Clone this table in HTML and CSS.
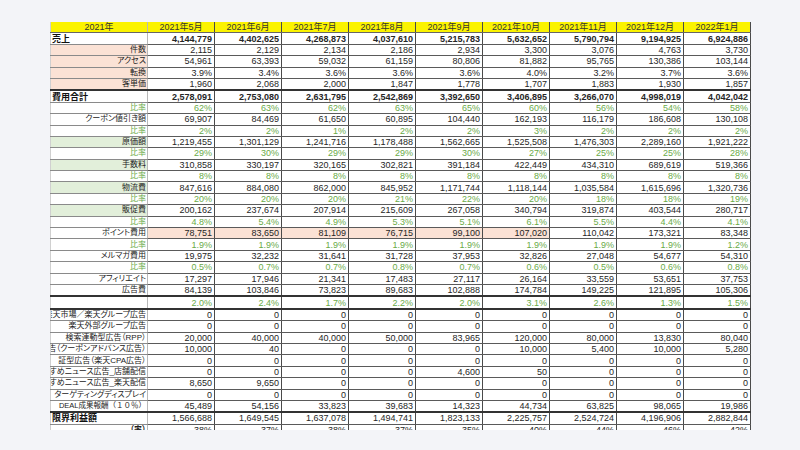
FILE: index.html
```html
<!DOCTYPE html>
<html lang="ja">
<head>
<meta charset="utf-8">
<title>2021年 月次損益</title>
<link rel="stylesheet" href="styles.css">
</head>
<body>
<div class="sheet">
<table class="grid">
<colgroup><col class="c-lab"><col class="c-m"><col class="c-m"><col class="c-m"><col class="c-m"><col class="c-m"><col class="c-m"><col class="c-m"><col class="c-m"><col class="c-m"></colgroup>
<tr class="head"><td class="lab"><div class="lt">2021年</div></td><td>2021年5月</td><td>2021年6月</td><td>2021年7月</td><td>2021年8月</td><td>2021年9月</td><td>2021年10月</td><td>2021年11月</td><td>2021年12月</td><td>2022年1月</td></tr>
<tr class="total"><td class="lab left"><div class="lt">売上</div></td><td>4,144,779</td><td>4,402,625</td><td>4,268,873</td><td>4,037,610</td><td>5,215,783</td><td>5,632,652</td><td>5,790,794</td><td>9,194,925</td><td>6,924,886</td></tr>
<tr><td class="lab pk"><div class="lt">件数</div></td><td>2,115</td><td>2,129</td><td>2,134</td><td>2,186</td><td>2,934</td><td>3,300</td><td>3,076</td><td>4,763</td><td>3,730</td></tr>
<tr><td class="lab pk"><div class="lt">アクセス</div></td><td>54,961</td><td>63,393</td><td>59,032</td><td>61,159</td><td>80,806</td><td>81,882</td><td>95,765</td><td>130,386</td><td>103,144</td></tr>
<tr><td class="lab pk"><div class="lt">転換</div></td><td>3.9%</td><td>3.4%</td><td>3.6%</td><td>3.6%</td><td>3.6%</td><td>4.0%</td><td>3.2%</td><td>3.7%</td><td>3.6%</td></tr>
<tr><td class="lab pk"><div class="lt">客単価</div></td><td>1,960</td><td>2,068</td><td>2,000</td><td>1,847</td><td>1,778</td><td>1,707</td><td>1,883</td><td>1,930</td><td>1,857</td></tr>
<tr class="total thick"><td class="lab left"><div class="lt">費用合計</div></td><td>2,578,091</td><td>2,753,080</td><td>2,631,795</td><td>2,542,869</td><td>3,392,650</td><td>3,406,895</td><td>3,266,070</td><td>4,998,019</td><td>4,042,042</td></tr>
<tr class="ratio"><td class="lab"><div class="lt">比率</div></td><td>62%</td><td>63%</td><td>62%</td><td>63%</td><td>65%</td><td>60%</td><td>56%</td><td>54%</td><td>58%</td></tr>
<tr><td class="lab"><div class="lt">クーポン値引き額</div></td><td>69,907</td><td>84,469</td><td>61,650</td><td>60,895</td><td>104,440</td><td>162,193</td><td>116,179</td><td>186,608</td><td>130,108</td></tr>
<tr class="ratio"><td class="lab"><div class="lt">比率</div></td><td>2%</td><td>2%</td><td>1%</td><td>2%</td><td>2%</td><td>3%</td><td>2%</td><td>2%</td><td>2%</td></tr>
<tr><td class="lab gn"><div class="lt">原価額</div></td><td>1,219,455</td><td>1,301,129</td><td>1,241,716</td><td>1,178,488</td><td>1,562,665</td><td>1,525,508</td><td>1,476,303</td><td>2,289,160</td><td>1,921,222</td></tr>
<tr class="ratio"><td class="lab"><div class="lt">比率</div></td><td>29%</td><td>30%</td><td>29%</td><td>29%</td><td>30%</td><td>27%</td><td>25%</td><td>25%</td><td>28%</td></tr>
<tr><td class="lab gn"><div class="lt">手数料</div></td><td>310,858</td><td>330,197</td><td>320,165</td><td>302,821</td><td>391,184</td><td>422,449</td><td>434,310</td><td>689,619</td><td>519,366</td></tr>
<tr class="ratio"><td class="lab"><div class="lt">比率</div></td><td>8%</td><td>8%</td><td>8%</td><td>8%</td><td>8%</td><td>8%</td><td>8%</td><td>8%</td><td>8%</td></tr>
<tr><td class="lab gn"><div class="lt">物流費</div></td><td>847,616</td><td>884,080</td><td>862,000</td><td>845,952</td><td>1,171,744</td><td>1,118,144</td><td>1,035,584</td><td>1,615,696</td><td>1,320,736</td></tr>
<tr class="ratio"><td class="lab"><div class="lt">比率</div></td><td>20%</td><td>20%</td><td>20%</td><td>21%</td><td>22%</td><td>20%</td><td>18%</td><td>18%</td><td>19%</td></tr>
<tr><td class="lab gn"><div class="lt">販促費</div></td><td>200,162</td><td>237,674</td><td>207,914</td><td>215,609</td><td>267,058</td><td>340,794</td><td>319,874</td><td>403,544</td><td>280,717</td></tr>
<tr class="ratio"><td class="lab"><div class="lt">比率</div></td><td>4.8%</td><td>5.4%</td><td>4.9%</td><td>5.3%</td><td>5.1%</td><td>6.1%</td><td>5.5%</td><td>4.4%</td><td>4.1%</td></tr>
<tr><td class="lab"><div class="lt">ポイント費用</div></td><td class="pk">78,751</td><td class="pk">83,650</td><td class="pk">81,109</td><td class="pk">76,715</td><td class="pk">99,100</td><td class="pk">107,020</td><td>110,042</td><td>173,321</td><td>83,348</td></tr>
<tr class="ratio"><td class="lab"><div class="lt">比率</div></td><td>1.9%</td><td>1.9%</td><td>1.9%</td><td>1.9%</td><td>1.9%</td><td>1.9%</td><td>1.9%</td><td>1.9%</td><td>1.2%</td></tr>
<tr><td class="lab"><div class="lt">メルマガ費用</div></td><td>19,975</td><td>32,232</td><td>31,641</td><td>31,728</td><td>37,953</td><td>32,826</td><td>27,048</td><td>54,677</td><td>54,310</td></tr>
<tr class="ratio"><td class="lab"><div class="lt">比率</div></td><td>0.5%</td><td>0.7%</td><td>0.7%</td><td>0.8%</td><td>0.7%</td><td>0.6%</td><td>0.5%</td><td>0.6%</td><td>0.8%</td></tr>
<tr><td class="lab"><div class="lt">アフィリエイト</div></td><td>17,297</td><td>17,946</td><td>21,341</td><td>17,483</td><td>27,117</td><td>26,164</td><td>33,559</td><td>53,651</td><td>37,753</td></tr>
<tr><td class="lab"><div class="lt">広告費</div></td><td>84,139</td><td>103,846</td><td>73,823</td><td>89,683</td><td>102,888</td><td>174,784</td><td>149,225</td><td>121,895</td><td>105,306</td></tr>
<tr class="ratio thick"><td class="lab"><div class="lt"></div></td><td>2.0%</td><td>2.4%</td><td>1.7%</td><td>2.2%</td><td>2.0%</td><td>3.1%</td><td>2.6%</td><td>1.3%</td><td>1.5%</td></tr>
<tr class="thick"><td class="lab"><div class="lt">楽天市場／楽天グループ広告</div></td><td>0</td><td>0</td><td>0</td><td>0</td><td>0</td><td>0</td><td>0</td><td>0</td><td>0</td></tr>
<tr><td class="lab"><div class="lt">楽天外部グループ広告</div></td><td>0</td><td>0</td><td>0</td><td>0</td><td>0</td><td>0</td><td>0</td><td>0</td><td>0</td></tr>
<tr><td class="lab"><div class="lt">検索連動型広告（RPP）</div></td><td>20,000</td><td>40,000</td><td>40,000</td><td>50,000</td><td>83,965</td><td>120,000</td><td>80,000</td><td>13,830</td><td>80,040</td></tr>
<tr><td class="lab"><div class="lt">告（クーポンアドバンス広告）</div></td><td>10,000</td><td>40</td><td>0</td><td>0</td><td>0</td><td>10,000</td><td>5,400</td><td>10,000</td><td>5,280</td></tr>
<tr><td class="lab"><div class="lt">証型広告（楽天CPA広告）</div></td><td>0</td><td>0</td><td>0</td><td>0</td><td>0</td><td>0</td><td>0</td><td>0</td><td>0</td></tr>
<tr><td class="lab"><div class="lt">すすめニュース広告_店舗配信</div></td><td>0</td><td>0</td><td>0</td><td>0</td><td>4,600</td><td>50</td><td>0</td><td>0</td><td>0</td></tr>
<tr><td class="lab"><div class="lt">すすめニュース広告_楽天配信</div></td><td>8,650</td><td>9,650</td><td>0</td><td>0</td><td>0</td><td>0</td><td>0</td><td>0</td><td>0</td></tr>
<tr><td class="lab"><div class="lt">ターゲティングディスプレイ</div></td><td>0</td><td>0</td><td>0</td><td>0</td><td>0</td><td>0</td><td>0</td><td>0</td><td>0</td></tr>
<tr><td class="lab wide"><div class="lt">DEAL成果報酬（１０％）</div></td><td>45,489</td><td>54,156</td><td>33,823</td><td>39,683</td><td>14,323</td><td>44,734</td><td>63,825</td><td>98,065</td><td>19,986</td></tr>
<tr class="thick profit"><td class="lab left"><div class="lt">限界利益額</div></td><td>1,566,688</td><td>1,649,545</td><td>1,637,078</td><td>1,494,741</td><td>1,823,133</td><td>2,225,757</td><td>2,524,724</td><td>4,196,906</td><td>2,882,844</td></tr>
<tr class="rate"><td class="lab"><div class="lt">（率）</div></td><td>38%</td><td>37%</td><td>38%</td><td>37%</td><td>35%</td><td>40%</td><td>44%</td><td>46%</td><td>42%</td></tr>
</table>
</div>
</body>
</html>
```
FILE: styles.css
```css
html, body {
  margin: 0;
  padding: 0;
}

body {
  background: #f3f4f8;
  font-family: "Liberation Sans", "Noto Sans CJK JP", sans-serif;
  font-size: 9px;
  color: #262626;
}

.sheet {
  margin: 22px 0 0 50px;
  width: 702px;
  height: 408px;
  overflow: hidden;
}

.grid {
  border-collapse: collapse;
  table-layout: fixed;
  width: 701px;
  background: #fff;
}

.c-lab { width: 97px; }
.c-m { width: 67px; }

.grid td {
  height: 10.4px;
  padding: 0 2px 0 0;
  line-height: 10px;
  text-align: right;
  white-space: nowrap;
  overflow: hidden;
  border-left: 1px solid #4a4a4a;
  border-right: 1px solid #4a4a4a;
  border-bottom: 1px solid #5a5a5a;
}

.grid td.lab {
  padding: 0 1px 0 0;
  border-left: 1px solid #d0d0d0;
  border-right: 1px solid #b8b8b8;
  border-bottom: 1px solid #8a8a8a;
  font-size: 8px;
  font-feature-settings: "palt";
  color: #222;
}

.grid td.lab.wide {
  font-feature-settings: normal;
  font-size: 7.5px;
  padding-right: 1px;
}

.lt {
  display: flex;
  justify-content: flex-end;
  overflow: hidden;
  white-space: nowrap;
}

.lab.left .lt {
  justify-content: flex-start;
  padding-left: 1px;
}

.grid tr.head td {
  background: #fbf300;
  text-align: center;
  padding: 0;
  color: #333;
  border-bottom: 1px solid #666;
}

.head .lab .lt {
  justify-content: center;
}

.grid tr.head td.lab {
  font-size: 9px;
}

.total td {
  font-weight: bold;
}

.grid tr.total td.lab {
  font-size: 9px;
  color: #111;
}

.grid tr.thick td {
  border-top: 2px solid #333;
}

.grid tr.ratio td {
  color: #6aab48;
}

.grid td.pk {
  background: #fbe2d5;
}

.grid td.gn {
  background: #e2efda;
}

.grid tr.profit td.lab {
  font-weight: bold;
  font-size: 9px;
  color: #111;
}

.grid tr.rate td.lab {
  font-weight: bold;
}
```
